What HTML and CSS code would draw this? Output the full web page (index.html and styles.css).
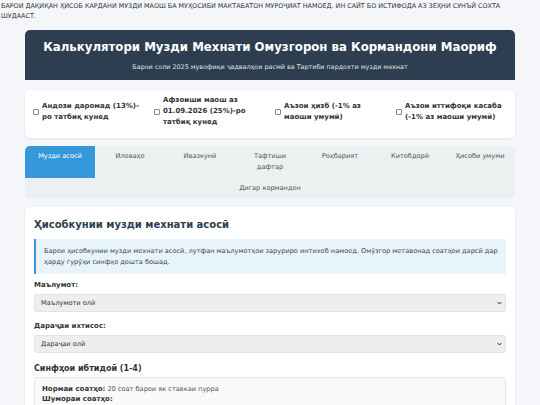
FILE: index.html
```html
<!DOCTYPE html>
<html lang="tg">
<head>
<meta charset="utf-8">
<title>Калькулятори Музди Мехнати</title>
<link rel="stylesheet" href="styles.css">
</head>
<body>
<p class="notice">БАРОИ ДАҚИҚАН ҲИСОБ КАРДАНИ МУЗДИ МАОШ БА МУҲОСИБИ МАКТАБАТОН МУРОҶИАТ НАМОЕД. ИН САЙТ БО ИСТИФОДА АЗ ЗЕҲНИ СУНЪӢ СОХТА ШУДААСТ.</p>
<div class="container">
  <header class="header">
    <h1 class="title">Калькулятори Музди Мехнати Омузгорон ва Кормандони Маориф</h1>
    <p class="subtitle">Барои соли 2025 мувофиқи ҷадвалҳои расмӣ ва Тартиби пардохти музди мехнат</p>
  </header>

  <div class="options">
    <label class="opt"><span class="cb"></span><span>Андози даромад (13%)-ро татбиқ кунед</span></label>
    <label class="opt"><span class="cb"></span><span>Афзоиши маош аз 01.09.2026 (25%)-ро татбиқ кунед</span></label>
    <label class="opt"><span class="cb"></span><span>Аъзои ҳизб (-1% аз маоши умумӣ)</span></label>
    <label class="opt"><span class="cb"></span><span>Аъзои иттифоқи касаба (-1% аз маоши умумӣ)</span></label>
  </div>

  <nav class="tabs">
    <div class="tab active">Музди асосӣ</div>
    <div class="tab">Иловаҳо</div>
    <div class="tab">Ивазкунӣ</div>
    <div class="tab">Тафтиши дафтар</div>
    <div class="tab">Роҳбарият</div>
    <div class="tab">Китобдорӣ</div>
    <div class="tab">Ҳисоби умуми</div>
    <div class="tab">Дигар кормандон</div>
  </nav>

  <section class="card">
    <h2 class="card-title">Ҳисобкунии музди мехнати асосӣ</h2>
    <div class="info">Барои ҳисобкунии музди мехнати асосӣ, лутфан маълумотҳои заруриро интихоб намоед. Омӯзгор метавонад соатҳои дарсӣ дар ҳарду гурӯҳи синфҳо дошта бошад.</div>

    <div class="group">
      <div class="label">Маълумот:</div>
      <div class="select"><span>Маълумоти олӣ</span><svg class="chev" viewBox="0 0 8 5" width="5" height="4"><path d="M1 1 L4 4 L7 1" fill="none" stroke="#222" stroke-width="1.6"/></svg></div>
    </div>
    <div class="group">
      <div class="label">Дараҷаи ихтисос:</div>
      <div class="select"><span>Дараҷаи олӣ</span><svg class="chev" viewBox="0 0 8 5" width="5" height="4"><path d="M1 1 L4 4 L7 1" fill="none" stroke="#222" stroke-width="1.6"/></svg></div>
    </div>

    <h3 class="sub-title">Синфҳои ибтидоӣ (1-4)</h3>
    <div class="box">
      <div><b>Нормаи соатҳо:</b> 20 соат барои як ставкаи пурра</div>
      <div><b>Шумораи соатҳо:</b></div>
      <div class="input"></div>
    </div>
  </section>
</div>
</body>
</html>
```

FILE: styles.css
```css
* { box-sizing: border-box; }
html, body { margin: 0; padding: 0; }
body {
  background: #f4f6fa;
  font-family: "DejaVu Sans", Verdana, sans-serif;
  font-size: 6.6px;
  color: #333;
  line-height: 1.6;
}
.notice {
  margin: 0;
  padding: 1px 24px 0 1px;
  font-size: 6.4px;
  line-height: 10px;
  color: #333;
}
.container {
  width: 490px;
  margin: 9px auto 0;
}
.header {
  background: #2c3e50;
  color: #fff;
  border-radius: 5px 5px 0 0;
  text-align: center;
  padding: 9px 10px 0;
  height: 50px;
}
.title {
  margin: 0;
  font-size: 11.75px;
  line-height: 17px;
  font-weight: bold;
}
.subtitle {
  margin: 7px 0 0;
  font-size: 6.4px;
  line-height: 9px;
  opacity: 0.85;
}
.options {
  margin-top: 10px;
  background: #fff;
  border-radius: 5px;
  box-shadow: 0 1px 3px rgba(0,0,0,0.08);
  padding: 5px 8px 10px;
  display: grid;
  grid-template-columns: repeat(4, 1fr);
  column-gap: 10px;
}
.opt {
  display: flex;
  align-items: center;
  gap: 3px;
  font-weight: bold;
  font-size: 7px;
  color: #333;
  line-height: 11px;
}
.cb {
  flex: none;
  width: 6px;
  height: 6px;
  border: 1px solid #888;
  border-radius: 1px;
  background: #fff;
}
.tabs {
  margin-top: 8px;
  background: #ecf0f1;
  border-radius: 5px;
  display: flex;
  flex-wrap: wrap;
  overflow: hidden;
}
.tab {
  flex: 1 0 70px;
  padding: 5px 8px;
  text-align: center;
  color: #555;
  line-height: 11px;
}
.tab:nth-child(-n+7) { flex: 0 0 70px; }
.tab.active {
  background: #3498db;
  color: #fff;
}
.card {
  margin-top: 8px;
  background: #fff;
  border-radius: 5px;
  box-shadow: 0 1px 3px rgba(0,0,0,0.08);
  padding: 10px 9px 20px;
}
.card-title {
  margin: 0 0 7px;
  font-size: 10px;
  line-height: 15px;
  color: #2c3e50;
}
.info {
  background: #e8f4fc;
  border-left: 2px solid #3498db;
  padding: 7px 8px 6px;
  color: #444;
  line-height: 11px;
  margin-bottom: 6px;
}
.group { margin-bottom: 9px; }
.label {
  font-weight: bold;
  font-size: 7px;
  color: #333;
  line-height: 11px;
  margin-bottom: 3px;
}
.select {
  height: 18px;
  background: #eee;
  border: 1px solid #e2e2e2;
  border-radius: 3px;
  display: flex;
  align-items: center;
  justify-content: space-between;
  padding: 0 3px 0 6px;
  color: #333;
}
.chev { display: block; }
.sub-title {
  margin: 0 0 2px;
  font-size: 8px;
  line-height: 13px;
  color: #333;
}
.box {
  background: #f9f9f9;
  border: 1px solid #e6e6e6;
  border-radius: 3px;
  padding: 6px 7px;
  line-height: 10px;
  color: #555;
}
.box b { color: #333; font-size: 7px; }
.input {
  margin-top: 3px;
  height: 18px;
  background: #fff;
  border: 1px solid #ddd;
  border-radius: 3px;
}
```
